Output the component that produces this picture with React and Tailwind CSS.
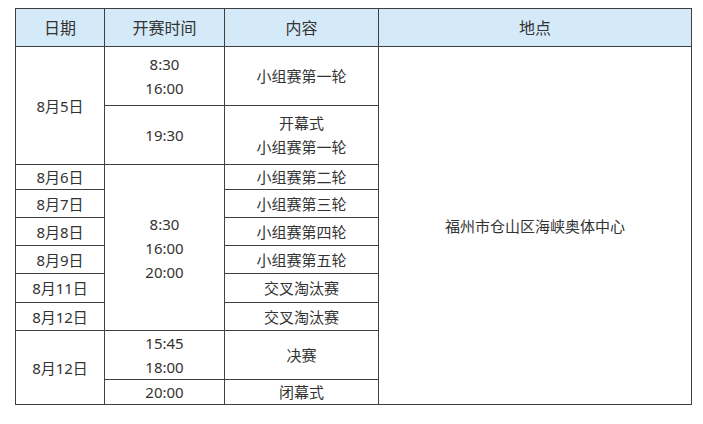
import React from 'react';

const cell = 'border border-[#3f3f3f] text-center align-middle p-0';

export default function App() {
  return (
    <div className="bg-white w-[703px] h-[424px] pt-2 pl-[15px] font-['Noto_Sans','Noto_Sans_CJK_SC',sans-serif] text-[15px] leading-6 text-[#333]">
      <table className="border-collapse table-fixed w-[677px]">
        <colgroup>
          <col className="w-[89px]" />
          <col className="w-[120px]" />
          <col className="w-[154px]" />
          <col />
        </colgroup>
        <thead>
          <tr className="h-[38px] bg-[#d5eaf9] text-base">
            <th className={`${cell} font-normal`}>日期</th>
            <th className={`${cell} font-normal`}>开赛时间</th>
            <th className={`${cell} font-normal`}>内容</th>
            <th className={`${cell} font-normal`}>地点</th>
          </tr>
        </thead>
        <tbody>
          <tr className="h-[59px]">
            <td className={cell} rowSpan={2}>8月5日</td>
            <td className={cell}>8:30<br />16:00</td>
            <td className={cell}>小组赛第一轮</td>
            <td className={cell} rowSpan={10}>福州市仓山区海峡奥体中心</td>
          </tr>
          <tr className="h-[59px]">
            <td className={cell}>19:30</td>
            <td className={cell}>开幕式<br />小组赛第一轮</td>
          </tr>
          <tr className="h-[25px]">
            <td className={cell}>8月6日</td>
            <td className={cell} rowSpan={6}>8:30<br />16:00<br />20:00</td>
            <td className={cell}>小组赛第二轮</td>
          </tr>
          <tr className="h-[28px]">
            <td className={cell}>8月7日</td>
            <td className={cell}>小组赛第三轮</td>
          </tr>
          <tr className="h-[28px]">
            <td className={cell}>8月8日</td>
            <td className={cell}>小组赛第四轮</td>
          </tr>
          <tr className="h-[28px]">
            <td className={cell}>8月9日</td>
            <td className={cell}>小组赛第五轮</td>
          </tr>
          <tr className="h-[29px]">
            <td className={cell}>8月11日</td>
            <td className={cell}>交叉淘汰赛</td>
          </tr>
          <tr className="h-[28px]">
            <td className={cell}>8月12日</td>
            <td className={cell}>交叉淘汰赛</td>
          </tr>
          <tr className="h-[49px]">
            <td className={cell} rowSpan={2}>8月12日</td>
            <td className={cell}>15:45<br />18:00</td>
            <td className={cell}>决赛</td>
          </tr>
          <tr className="h-[25px]">
            <td className={cell}>20:00</td>
            <td className={cell}>闭幕式</td>
          </tr>
        </tbody>
      </table>
    </div>
  );
}
